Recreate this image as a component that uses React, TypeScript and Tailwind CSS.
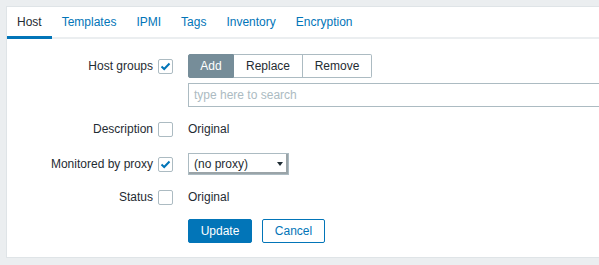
import React from "react";

const tabs = ["Host", "Templates", "IPMI", "Tags", "Inventory", "Encryption"];

function Check({ checked }: { checked?: boolean }) {
    return (
        <span className="flex h-[15px] w-[15px] items-center justify-center rounded-[2px] border border-[#acbbc2] bg-white">
            {checked && (
                <svg width="11" height="9" viewBox="0 0 11 9">
                    <path d="M1.5 4.5 L4.2 7 L9.5 1.5" fill="none" stroke="#0275b8" strokeWidth="2" />
                </svg>
            )}
        </span>
    );
}

function Row({ label, checked, children, className = "" }: { label: string; checked?: boolean; children: React.ReactNode; className?: string }) {
    return (
        <div className={"flex items-center " + className}>
            <div className="w-[146px] text-right">{label}</div>
            <div className="ml-[5px] mr-[15px]">
                <Check checked={checked} />
            </div>
            {children}
        </div>
    );
}

export default function App() {
    return (
        <div
            className="h-[265px] w-[599px] overflow-hidden bg-[#ebeef0] pl-[6px] pt-[6px] text-[12px] text-[#1f2c33]"
            style={{ fontFamily: '"Liberation Sans", Arial, sans-serif' }}
        >
            <div className="h-[252px] w-[700px] border border-r-0 border-[#dfe4e7] bg-white">
                <div className="flex shadow-[inset_0_-2px_0_#ebeef0]">
                    {tabs.map((t, i) => (
                        <div
                            key={t}
                            className={
                                "flex h-[32px] items-center border-b-[3px] px-[10px] " +
                                (i === 0 ? "border-[#0275b8] text-[#1f2c33]" : "border-transparent text-[#0275b8]")
                            }
                        >
                            {t}
                        </div>
                    ))}
                </div>

                <div className="pt-[15px]">
                    <div className="flex items-start">
                        <div className="flex h-[24px] items-center">
                            <div className="w-[146px] text-right">Host groups</div>
                            <div className="ml-[5px] mr-[15px]">
                                <Check checked />
                            </div>
                        </div>
                        <div className="flex flex-col gap-[5px]">
                            <div className="flex h-[24px]">
                                <div className="flex w-[46px] items-center justify-center rounded-l-[2px] border border-[#768d99] bg-[#768d99] text-white">Add</div>
                                <div className="flex w-[69px] items-center justify-center border border-l-0 border-[#acbbc2]">Replace</div>
                                <div className="flex w-[69px] items-center justify-center rounded-r-[2px] border border-l-0 border-[#acbbc2]">Remove</div>
                            </div>
                            <div className="flex h-[24px] w-[454px] items-center border border-[#acbbc2] px-[5px] text-[#acbbc2]">
                                type here to search
                            </div>
                        </div>
                    </div>

                    <Row label="Description" className="mt-[10px] h-[24px]">
                        <span>Original</span>
                    </Row>

                    <Row label="Monitored by proxy" checked className="mt-[11px] h-[24px]">
                        <div className="relative flex h-[22px] w-[101px] items-center border border-[#acbbc2] pl-[5px] shadow-[inset_-2px_-2px_0_#9aa4a8]">
                            (no proxy)
                            <span className="absolute right-[5px] top-[8px] h-0 w-0 border-x-[3px] border-t-[4px] border-x-transparent border-t-[#1f2c33]" />
                        </div>
                    </Row>

                    <Row label="Status" className="mt-[9px] h-[24px]">
                        <span>Original</span>
                    </Row>

                    <div className="mt-[10px] flex gap-[10px] pl-[181px]">
                        <button className="h-[24px] w-[64px] rounded-[2px] border border-[#0275b8] bg-[#0275b8] text-white">Update</button>
                        <button className="h-[24px] w-[63px] rounded-[2px] border border-[#0275b8] bg-white text-[#0275b8]">Cancel</button>
                    </div>
                </div>
            </div>
        </div>
    );
}
